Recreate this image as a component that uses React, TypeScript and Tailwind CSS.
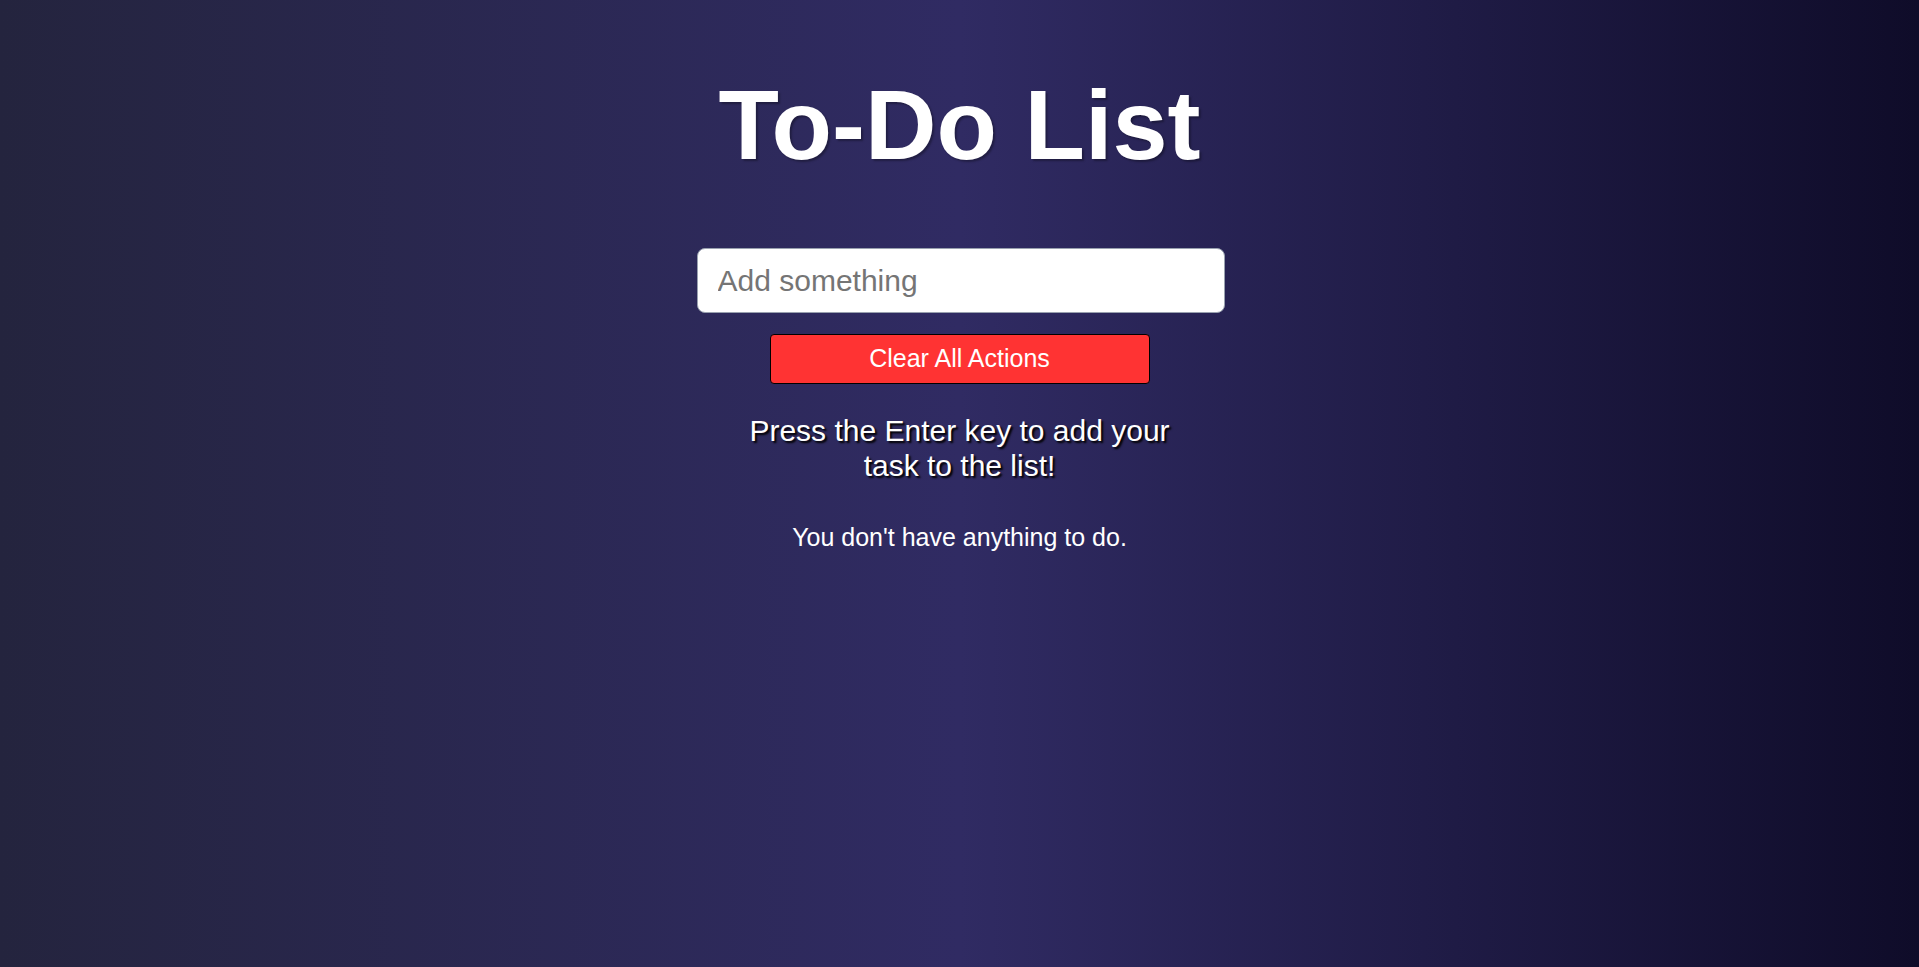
import React, { useState } from 'react';

export default function App() {
  const [text, setText] = useState('');
  const [todos, setTodos] = useState<string[]>([]);

  const onKey = (e: React.KeyboardEvent<HTMLInputElement>) => {
    if (e.key === 'Enter' && text.trim()) {
      setTodos([...todos, text.trim()]);
      setText('');
    }
  };

  return (
    <div className="min-h-screen w-full bg-[linear-gradient(to_right,#24243e,#302b63,#0f0c29)] font-['Liberation_Sans',Arial,sans-serif] text-white">
      <div className="flex flex-col items-center pt-[67px]">
        <h1 className="text-[99px] font-bold leading-[115px] [text-shadow:2px_2px_2px_rgba(0,0,0,0.3)]">
          To-Do List
        </h1>
        <input
          value={text}
          onChange={(e) => setText(e.target.value)}
          onKeyDown={onKey}
          placeholder="Add something"
          className="mt-[66px] ml-[2px] h-[65px] w-[528px] rounded-lg border border-gray-400 bg-white px-5 text-[30px] text-gray-800 placeholder:text-[#757575] outline-none"
        />
        <button
          onClick={() => setTodos([])}
          className="mt-[21px] h-[50px] w-[380px] rounded border border-black bg-[#ff3333] text-[25px] text-white"
        >
          Clear All Actions
        </button>
        <p className="mt-[30px] w-[440px] text-center text-[30px] leading-[34.5px] [text-shadow:2px_2px_2px_#000]">
          Press the Enter key to add your task to the list!
        </p>
        {todos.length === 0 ? (
          <p className="mt-[40px] text-[25px] leading-[28px]">You don't have anything to do.</p>
        ) : (
          <ul className="mt-[40px] flex flex-col gap-2 text-[25px]">
            {todos.map((t, i) => (
              <li key={i}>{t}</li>
            ))}
          </ul>
        )}
      </div>
    </div>
  );
}
